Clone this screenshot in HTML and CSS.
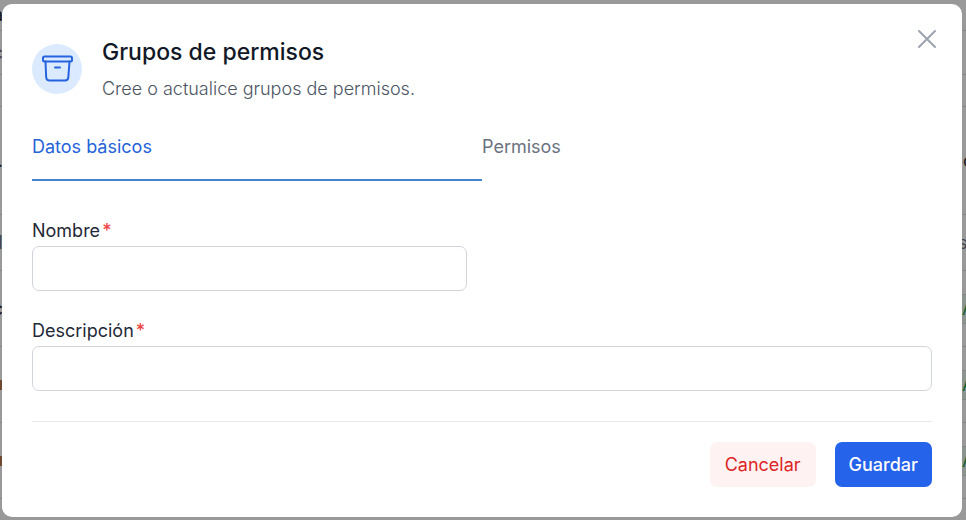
FILE: index.html
```html
<!DOCTYPE html>
<html lang="es">
<head>
<meta charset="utf-8">
<meta name="viewport" content="width=device-width, initial-scale=1">
<title>Grupos de permisos</title>
<link rel="stylesheet" href="styles.css">
</head>
<body>
<div class="page" aria-hidden="true">
  <div class="row row-top"><span class="start">a</span></div>
  <div class="row row-filter"><span class="start muted">c</span></div>
  <div class="row row-gap"></div>
  <div class="row row-intro"><span class="start">.</span><span class="end">c</span></div>
  <div class="row row-head"><span class="start muted">M</span><span class="end wide muted">s</span></div>
  <div class="row"><span class="start">c</span><span class="end badge">A</span></div>
  <div class="row"><span class="start tag">l</span><span class="end badge">A</span></div>
  <div class="row"><span class="start tag">l</span><span class="end badge">A</span></div>
</div>
<div class="overlay">
  <form class="dialog" role="dialog" aria-labelledby="title">
    <header class="header">
      <span class="emblem">
        <svg viewBox="0 0 34 34" width="34" height="34" fill="none" stroke="currentColor" stroke-width="2" stroke-linecap="round" stroke-linejoin="round" aria-hidden="true">
          <rect x="3" y="4.500" width="29" height="5" rx="1.5"/>
          <path d="M5.500 9.500 6.200 25.500Q6.500 28.500 9.500 28.500H25Q28 28.500 28.300 25.500L29.500 9.500M15 15.500H20"/>
        </svg>
      </span>
      <div class="heading">
        <h1 id="title">Grupos de permisos</h1>
        <p>Cree o actualice grupos de permisos.</p>
      </div>
      <button class="close" type="button" aria-label="Cerrar">
        <svg viewBox="0 0 20 20" width="20" height="20" fill="none" stroke="currentColor" stroke-width="2" stroke-linecap="round" aria-hidden="true"><path d="M2 2 18 18M18 2 2 18"/></svg>
      </button>
    </header>
    <nav class="tabs">
      <button class="tab active" type="button">Datos básicos</button>
      <button class="tab" type="button">Permisos</button>
    </nav>
    <div class="fields">
      <div class="field half">
        <label for="name">Nombre<span class="required">*</span></label>
        <input id="name" type="text">
      </div>
      <div class="field">
        <label for="description">Descripción<span class="required">*</span></label>
        <input id="description" type="text">
      </div>
    </div>
    <footer class="footer">
      <button class="button cancel" type="button">Cancelar</button>
      <button class="button save" type="submit">Guardar</button>
    </footer>
  </form>
</div>
</body>
</html>
```

FILE: styles.css
```css
* {
  box-sizing: border-box;
}

body {
  margin: 0;
  min-height: 100vh;
  background: #999;
  color: #1f2937;
  font: 18px/24px Inter, "Liberation Sans", sans-serif;
  overflow: hidden;
}

h1,
p {
  margin: 0;
}

button,
input {
  font: inherit;
}

button {
  padding: 0;
  border: 0;
  background: none;
  cursor: pointer;
}

/* Dimmed page behind the dialog */
.page {
  position: absolute;
  inset: 0;
  overflow: hidden;
  color: #15171c;
}

.row {
  display: flex;
  align-items: center;
  justify-content: space-between;
  height: 76px;
  border-bottom: 1px solid #858687;
}

.row-top { height: 31px; }
.row-filter { height: 44px; }
.row-gap { height: 32px; }
.row-intro { height: 108px; }
.row-head { height: 56px; }

.start,
.end {
  display: flex;
  width: 3px;
}

.start {
  justify-content: flex-end;
}

.end {
  margin-left: auto;
}

.wide {
  width: 8px;
}

.muted {
  color: #44474d;
}

.tag {
  height: 10px;
  background: #75675a;
  color: #6b4325;
  line-height: 10px;
  overflow: hidden;
}

.badge {
  width: 4px;
  border: solid #858687;
  border-width: 1px 0;
  background: #8c9490;
  color: #176332;
  line-height: 28px;
}

/* Dialog */
.overlay {
  position: relative;
  padding: 4px 4px 3px 2px;
}

.dialog {
  padding: 30px;
  border-radius: 10px;
  background: #fff;
}

.header {
  display: flex;
  align-items: center;
  gap: 20px;
  height: 70px;
}

.emblem {
  display: grid;
  place-items: center;
  width: 50px;
  height: 50px;
  border-radius: 50%;
  background: #dbeafe;
  color: #2563df;
}

.heading {
  flex: 1;
}

.heading h1 {
  color: #111827;
  font-size: 23px;
  font-weight: 500;
  line-height: 30px;
}

.heading p {
  margin-top: 10px;
  color: #4b5563;
  font-weight: 300;
}

.close {
  align-self: flex-start;
  display: grid;
  place-items: center;
  width: 20px;
  height: 20px;
  margin: -5px -5px 0 0;
  color: #9ca3af;
}

.tabs {
  display: grid;
  grid-template-columns: 1fr 1fr;
  margin-top: 30px;
}

.tab {
  height: 47px;
  padding-bottom: 20px;
  border-bottom: 2px solid transparent;
  color: #6b7280;
  text-align: left;
}

.tab.active {
  border-color: #4285cf;
  color: #2563d8;
}

.fields {
  display: grid;
  gap: 28px;
  margin-top: 38px;
}

.field {
  display: grid;
  gap: 3px;
}

.half {
  width: calc(50% - 15px);
}

.required {
  margin-left: 2px;
  color: #ef4444;
  font-weight: 500;
}

.field input {
  width: 100%;
  height: 45px;
  padding: 0 14px;
  border: 1px solid #d1d5db;
  border-radius: 7px;
  background: #fff;
}

.footer {
  display: flex;
  justify-content: flex-end;
  gap: 19px;
  margin-top: 30px;
  padding-top: 20px;
  border-top: 1px solid #e5e7eb;
}

.button {
  height: 45px;
  padding: 0 15px;
  border-radius: 7px;
}

.cancel {
  background: #fef2f2;
  color: #dc2626;
}

.save {
  padding: 0 14px;
  background: #2563eb;
  color: #fff;
  font-weight: 500;
}
```
